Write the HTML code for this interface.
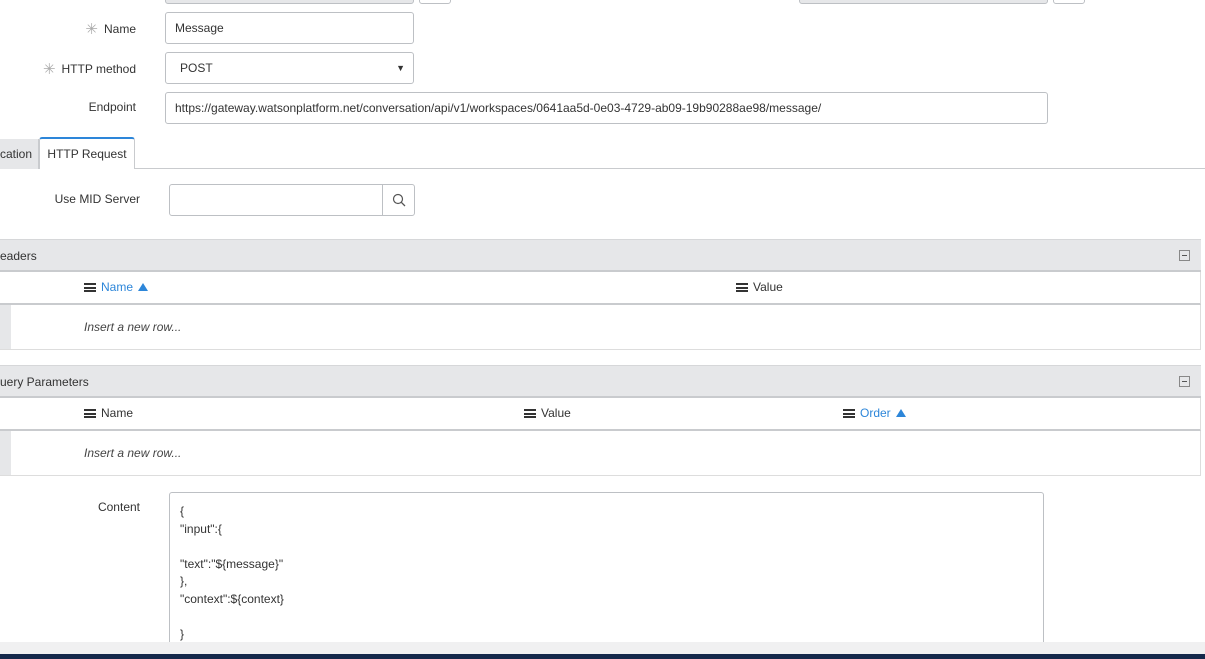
<!DOCTYPE html>
<html><head><style>
*{box-sizing:border-box;margin:0;padding:0}
body{width:1205px;height:659px;overflow:hidden;background:#fff;font-family:"Liberation Sans",sans-serif;font-size:12px;color:#333;position:relative}
.a{position:absolute}
.inp{position:absolute;border:1px solid #bdc0c4;border-radius:3px;background:#fff;padding-left:9px;line-height:31px;font-size:12px;color:#333}
.lbl{position:absolute;text-align:right;font-size:12px;color:#333}
.star{color:#aaa;font-size:15px;margin-right:6px;vertical-align:-1px}
.bar{position:absolute;left:0;width:1201px;background:#e6e7e9;border-top:1px solid #d6d7d9;border-bottom:2px solid #c9cbce;font-size:12px;padding-left:0;line-height:32px}
.hdr{position:absolute;left:0;width:1201px;background:#fff;border-bottom:2px solid #c9cbce;border-right:1px solid #ddd;line-height:31px}
.row{position:absolute;left:0;width:1201px;background:#fff;border-bottom:1px solid #ddd;border-right:1px solid #ddd}
.row .strip{position:absolute;left:0;top:0;bottom:0;width:11px;background:#e6e7e9}
.ham{display:inline-block;width:12px;height:9px;border-top:2px solid #333;border-bottom:2px solid #333;position:relative;margin-right:5px;vertical-align:-1px}
.ham:after{content:"";position:absolute;left:0;right:0;top:1.5px;border-top:2px solid #333}
.col{position:absolute;top:0}
.blue{color:#2d86d9}
.tri{display:inline-block;width:0;height:0;border-left:5px solid transparent;border-right:5px solid transparent;border-bottom:8px solid #2d86d9;margin-left:5px;vertical-align:0}
.mini{position:absolute;right:11px;top:10px;width:11px;height:11px;border:1px solid #888}
.mini:after{content:"";position:absolute;left:2px;right:2px;top:4px;border-top:1px solid #555}
.ins{position:absolute;left:84px;top:15px;font-style:italic;color:#444}
</style></head><body>
<div class="a" style="left:165px;top:-6px;width:249px;height:10px;background:#e6e7e9;border:1px solid #bdc0c4;border-radius:3px"></div>
<div class="a" style="left:419px;top:-6px;width:32px;height:10px;border:1px solid #bdc0c4;border-radius:3px"></div>
<div class="a" style="left:799px;top:-6px;width:249px;height:10px;background:#e6e7e9;border:1px solid #bdc0c4;border-radius:3px"></div>
<div class="a" style="left:1053px;top:-6px;width:32px;height:10px;border:1px solid #bdc0c4;border-radius:3px"></div>

<div class="lbl" style="left:0;width:136px;top:20px"><span class="star">✳</span>Name</div>
<div class="inp" style="left:165px;top:12px;width:249px;height:32px">Message</div>
<div class="lbl" style="left:0;width:136px;top:60px"><span class="star">✳</span>HTTP method</div>
<div class="inp" style="left:165px;top:52px;width:249px;height:32px;padding-left:14px">POST<span style="position:absolute;right:8px;font-size:9px">▼</span></div>
<div class="lbl" style="left:0;width:136px;top:100px">Endpoint</div>
<div class="inp" style="left:165px;top:92px;width:883px;height:32px">https://gateway.watsonplatform.net/conversation/api/v1/workspaces/0641aa5d-0e03-4729-ab09-19b90288ae98/message/</div>

<div class="a" style="left:0;top:168px;width:1205px;border-top:1px solid #c9cbce"></div>
<div class="a" style="left:0;top:139px;width:39px;height:30px;background:#e6e7e9;border-right:1px solid #c9cbce;line-height:31px;text-align:right;padding-right:9px;overflow:hidden">cation</div>
<div class="a" style="left:39px;top:137px;width:96px;height:32px;background:#fff;border:1px solid #c9cbce;border-top:2px solid #2d86d9;border-bottom:none;border-radius:3px 3px 0 0;line-height:31px;text-align:center">HTTP Request</div>

<div class="lbl" style="left:0;width:140px;top:192px">Use MID Server</div>
<div class="inp" style="left:169px;top:184px;width:246px;height:32px"></div>
<div class="a" style="left:382px;top:184px;width:33px;height:32px;border-left:1px solid #bdc0c4">
<svg width="33" height="32"><circle cx="15" cy="15" r="4.5" fill="none" stroke="#555" stroke-width="1.2"/><line x1="18.3" y1="18.3" x2="22" y2="22" stroke="#555" stroke-width="1.3"/></svg></div>

<div class="bar" style="top:239px;height:33px">eaders<div class="mini"></div></div>
<div class="hdr" style="top:272px;height:33px"><div class="col blue" style="left:84px"><span class="ham"></span>Name<span class="tri"></span></div><div class="col" style="left:736px"><span class="ham"></span>Value</div></div>
<div class="row" style="top:305px;height:45px"><div class="strip"></div><div class="ins">Insert a new row...</div></div>

<div class="bar" style="top:365px;height:33px">uery Parameters<div class="mini"></div></div>
<div class="hdr" style="top:398px;height:33px"><div class="col" style="left:84px"><span class="ham"></span>Name</div><div class="col" style="left:524px"><span class="ham"></span>Value</div><div class="col blue" style="left:843px"><span class="ham"></span>Order<span class="tri"></span></div></div>
<div class="row" style="top:431px;height:45px"><div class="strip"></div><div class="ins">Insert a new row...</div></div>

<div class="lbl" style="left:0;width:140px;top:500px">Content</div>
<div class="a" style="left:169px;top:492px;width:875px;height:160px;border:1px solid #bdc0c4;border-radius:3px;padding:10px 0 0 10px;font-size:12px;line-height:17.5px;white-space:pre">{
"input":{

"text":"${message}"
},
"context":${context}

}</div>
<div class="a" style="left:0;top:642px;width:1205px;height:12px;background:#f0f0f1"></div>
<div class="a" style="left:0;top:654px;width:1205px;height:5px;background:#14284a"></div>
</body></html>
